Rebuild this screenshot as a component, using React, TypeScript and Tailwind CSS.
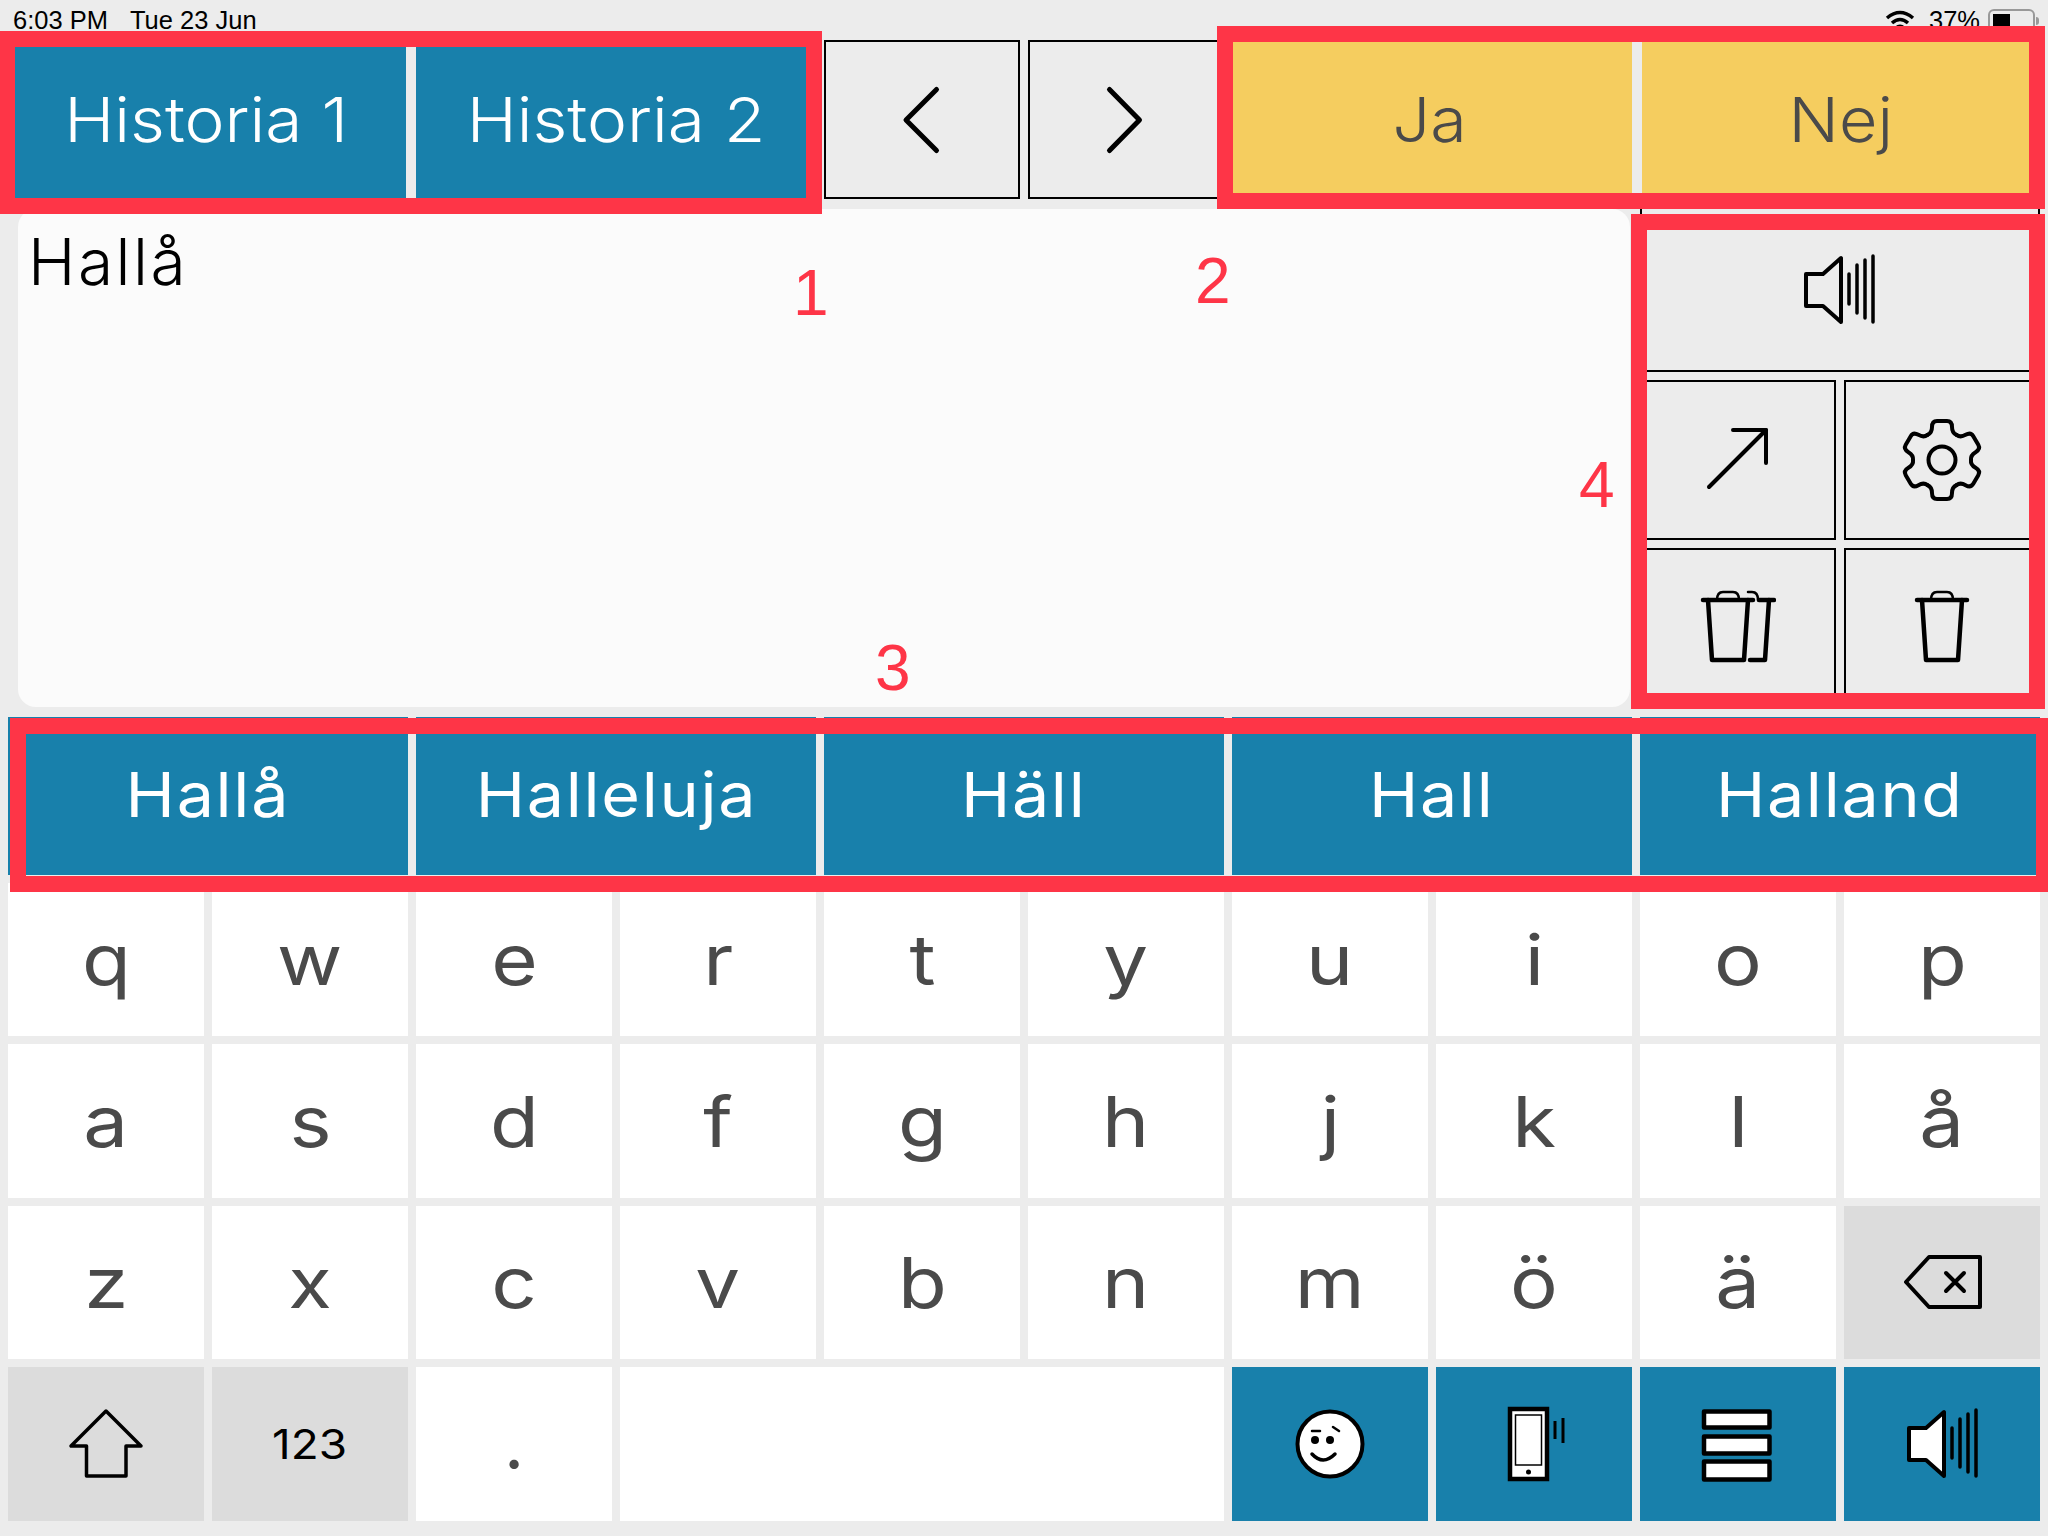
import React from "react";

const Chevron = ({ dir }: { dir: "l" | "r" }) => (
  <svg width="44" height="72" viewBox="0 0 44 72" fill="none" stroke="#000" strokeWidth="5" strokeLinecap="round" strokeLinejoin="round">
    {dir === "l" ? <path d="M36.5 5.5 L6 36 L36.5 66.5" /> : <path d="M5.5 5.5 L35.5 36 L5.5 66.5" />}
  </svg>
);

const Speaker = ({ filled }: { filled?: boolean }) => (
  <svg width="76" height="72" viewBox="0 0 76 72" fill={filled ? "#fff" : "none"} stroke="#000" strokeLinecap="round" strokeLinejoin="round">
    <path d="M3 19 H20 L38 3 V67 L20 51 H3 Z" strokeWidth="4" transform="translate(0,1)" />
    <g strokeWidth="3.5" fill="none">
      <path d="M46 20 V50" />
      <path d="M54 11 V59" />
      <path d="M62 6 V64" />
      <path d="M70 2 V68" />
    </g>
  </svg>
);

const Arrow = () => (
  <svg width="64" height="64" viewBox="0 0 64 64" fill="none" stroke="#000" strokeWidth="4" strokeLinecap="round" strokeLinejoin="round">
    <path d="M3 61 L60 4" />
    <path d="M27 4 H60 V37" />
  </svg>
);

const Gear = () => (
  <svg width="88" height="88" viewBox="-44 -44 88 88" fill="none" stroke="#000" strokeWidth="4" strokeLinecap="round" strokeLinejoin="round">
    {[0, 60, 120, 180, 240, 300].map((a) => (
      <path key={a} transform={`rotate(${a})`} d="M-14.5 -25.1 Q-10 -27 -10 -33 Q-10 -39 -5 -39 L5 -39 Q10 -39 10 -33 Q10 -27 14.5 -25.1" />
    ))}
    <circle r="13.5" />
  </svg>
);

const Trash = () => (
  <svg width="56" height="76" viewBox="0 0 56 76" fill="none" stroke="#000" strokeLinecap="round" strokeLinejoin="round">
    <path d="M3 11 H53" strokeWidth="4.5" />
    <path d="M8 11 L12 71 H44 L48 11" strokeWidth="4.5" />
    <path d="M17 11 C17 5 19 3 23 3 H33 C37 3 39 5 39 11" strokeWidth="2.5" />
  </svg>
);

const TrashDouble = () => (
  <svg width="76" height="76" viewBox="0 0 76 76" fill="none" stroke="#000" strokeLinecap="round" strokeLinejoin="round">
    <path d="M3 11 H53" strokeWidth="4.5" />
    <path d="M8 11 L12 71 H44 L48 11" strokeWidth="4.5" />
    <path d="M17 11 C17 5 19 3 23 3 H33 C37 3 39 5 39 11" strokeWidth="2.5" />
    <path d="M59 11 H74" strokeWidth="4.5" />
    <path d="M69 11 L65 71 H50" strokeWidth="4.5" />
    <path d="M48 3 H52 C56 3 58 6 58 11" strokeWidth="2.5" />
  </svg>
);

const Shift = () => (
  <svg width="80" height="72" viewBox="0 0 80 72" fill="none" stroke="#000" strokeWidth="3.5" strokeLinecap="round" strokeLinejoin="round">
    <path d="M40 3 L5 38 H20.5 V68 H60 V38 H75 Z" />
  </svg>
);

const Backspace = () => (
  <svg width="80" height="56" viewBox="0 0 80 56" fill="none" stroke="#000" strokeLinecap="round" strokeLinejoin="round">
    <path d="M2 28 L25 3 H76 V53 H25 Z" strokeWidth="4" />
    <path d="M42 19 L60 37 M60 19 L42 37" strokeWidth="4" />
  </svg>
);

const Face = () => (
  <svg width="72" height="72" viewBox="0 0 72 72" stroke="#000" strokeLinecap="round" fill="none">
    <circle cx="36" cy="36" r="32.5" fill="#fff" strokeWidth="4" />
    <circle cx="21" cy="32" r="4" fill="#000" stroke="none" />
    <circle cx="36" cy="32" r="4" fill="#000" stroke="none" />
    <path d="M18 23 H26" strokeWidth="2.5" />
    <path d="M39 19 L45 23" strokeWidth="2.5" />
    <path d="M18 46 Q29 58 41 46" strokeWidth="3.5" />
  </svg>
);

const Phone = () => (
  <svg width="64" height="76" viewBox="0 0 64 76" fill="none" stroke="#000">
    <rect x="3" y="3" width="37" height="70" fill="#fff" strokeWidth="4.5" />
    <rect x="8.5" y="9" width="26" height="50" strokeWidth="1.5" />
    <circle cx="21.5" cy="66" r="2.5" fill="#000" stroke="none" />
    <path d="M48 15 V33" strokeWidth="3" />
    <path d="M56 12 V37" strokeWidth="3" />
  </svg>
);

const Bars = () => (
  <svg width="76" height="80" viewBox="0 0 76 80" fill="#fff" stroke="#000" strokeWidth="4.5" strokeLinejoin="round">
    <rect x="4" y="7.5" width="65.5" height="16" />
    <rect x="4" y="32.5" width="65.5" height="17" />
    <rect x="4" y="57.5" width="65.5" height="18" />
  </svg>
);

const Outlined = ({ className, children }: { className: string; children: React.ReactNode }) => (
  <div className={`flex items-center justify-center border-2 border-black ${className}`}>{children}</div>
);

const letterRows = [
  ["q", "w", "e", "r", "t", "y", "u", "i", "o", "p"],
  ["a", "s", "d", "f", "g", "h", "j", "k", "l", "å"],
  ["z", "x", "c", "v", "b", "n", "m", "ö", "ä"],
];

const Key = ({ children, className = "bg-white" }: { children?: React.ReactNode; className?: string }) => (
  <div className={`flex items-center justify-center text-[70px] text-[#4a4a4a] ${className}`}>{children}</div>
);

const Letter = ({ children }: { children: React.ReactNode }) => <span className="scale-x-[1.14]">{children}</span>;
const Wide = ({ children }: { children: React.ReactNode }) => <span className="scale-x-[1.07]">{children}</span>;

const frame = "absolute pointer-events-none border-[16px] border-[#fe3547]";
const mark = "absolute text-[64px] leading-none text-[#fe3547] font-['Liberation_Sans',sans-serif]";

export default function App() {
  return (
    <div className="relative flex h-[1536px] w-[2048px] flex-col overflow-hidden bg-[#ececec] font-['Inter',sans-serif]">
      {/* status bar */}
      <div className="flex h-10 items-start justify-between pl-[13px] pr-[13px] pt-[7px] font-['Liberation_Sans',sans-serif] text-[25.5px] leading-[26px] text-black">
        <div className="flex gap-[22px]">
          <span>6:03 PM</span>
          <span>Tue 23 Jun</span>
        </div>
        <div className="flex items-start gap-[8px]">
          <svg width="30" height="24" viewBox="0 0 30 24" className="mr-[6px] mt-[2px]" fill="none" stroke="#000" strokeWidth="3.5">
            <path d="M2 9 Q15 -2 28 9" />
            <path d="M7 14 Q15 7 23 14" />
            <path d="M11 19 Q15 15.5 19 19" />
          </svg>
          <span>37%</span>
          <div className="relative mt-[2px] h-[26px] w-[47px] rounded-[6px] border-2 border-[#999] p-[3px]">
            <div className="h-full w-[17px] bg-black" />
            <div className="absolute right-[-6px] top-[6px] h-[8px] w-[3px] rounded-r-sm bg-[#999]" />
          </div>
        </div>
      </div>

      {/* top row */}
      <div className="grid h-[159px] grid-cols-10 gap-2 px-2 text-[62px] font-light">
        <div className="col-span-2 mr-[2px] flex items-center justify-center bg-[#1880ab] pr-[2px] text-white"><span className="scale-x-[1.09]">Historia 1</span></div>
        <div className="col-span-2 flex items-center justify-center bg-[#1880ab] text-white"><span className="scale-x-[1.09]">Historia 2</span></div>
        <Outlined className=""><Chevron dir="l" /></Outlined>
        <Outlined className=""><Chevron dir="r" /></Outlined>
        <div className="col-span-2 flex items-center justify-center bg-[#f5cd5f] pr-[4px] text-[#4a4a4a]"><Wide>Ja</Wide></div>
        <div className="col-span-2 ml-[2px] flex items-center justify-center bg-[#f5cd5f] text-[#4a4a4a]"><Wide>Nej</Wide></div>
      </div>

      {/* middle */}
      <div className="mb-2 mt-2 flex h-[502px] pl-[18px] pr-2">
        <div className="mr-[10px] mt-[2px] h-[498px] w-[1612px] rounded-[18px] bg-[#fbfbfb] pl-[10px] pt-[16px] text-[64px] font-light leading-[74px] tracking-[2.5px] text-black">
          Hallå
        </div>
        <div className="grid w-[400px] grid-cols-2 grid-rows-[165px_160px_161px] gap-2">
          <Outlined className="col-span-2 pl-[2px]"><Speaker /></Outlined>
          <Outlined className="pb-[4px]"><Arrow /></Outlined>
          <Outlined className=""><Gear /></Outlined>
          <Outlined className="pb-[4px]"><TrashDouble /></Outlined>
          <Outlined className="pb-[4px]"><Trash /></Outlined>
        </div>
      </div>

      {/* suggestions */}
      <div className="grid h-[158px] grid-cols-5 gap-2 px-2 pb-0 text-[62px] tracking-[1.6px] text-white">
        {["Hallå", "Halleluja", "Häll", "Hall", "Halland"].map((w) => (
          <div key={w} className="flex items-center justify-center bg-[#1880ab] pb-[3px]"><Wide>{w}</Wide></div>
        ))}
      </div>

      {/* keyboard */}
      <div className="mt-2 grid auto-rows-[153.4px] grid-cols-10 gap-2 px-2">
        {letterRows.map((row) => row.map((k) => <Key key={k}><Letter>{k}</Letter></Key>))}
        <Key className="bg-[#dcdcdc] pl-[3px]"><Backspace /></Key>
        <Key className="bg-[#dcdcdc]"><Shift /></Key>
        <Key className="bg-[#dcdcdc]"><span className="scale-x-[1.12] pt-[1px] text-[41px] text-black">123</span></Key>
        <Key>.</Key>
        <Key className="col-span-3 bg-white" />
        <Key className="bg-[#1880ab]"><Face /></Key>
        <Key className="bg-[#1880ab] pl-[9px]"><Phone /></Key>
        <Key className="bg-[#1880ab]"><Bars /></Key>
        <Key className="bg-[#1880ab] pl-[3px]"><Speaker filled /></Key>
      </div>

      {/* annotation frames */}
      <div className={`${frame} left-[-1px] top-[31px] h-[183px] w-[823px]`} />
      <div className={`${frame} left-[1217px] top-[26px] h-[183px] w-[828px]`} />
      <div className={`${frame} left-[10px] top-[718px] h-[174px] w-[2042px]`} />
      <div className={`${frame} left-[1631px] top-[214px] h-[495px] w-[414px]`} />
      <span className={`${mark} left-[793px] top-[261px]`}>1</span>
      <span className={`${mark} left-[1195px] top-[249px]`}>2</span>
      <span className={`${mark} left-[875px] top-[636px]`}>3</span>
      <span className={`${mark} left-[1579px] top-[453px]`}>4</span>
    </div>
  );
}
